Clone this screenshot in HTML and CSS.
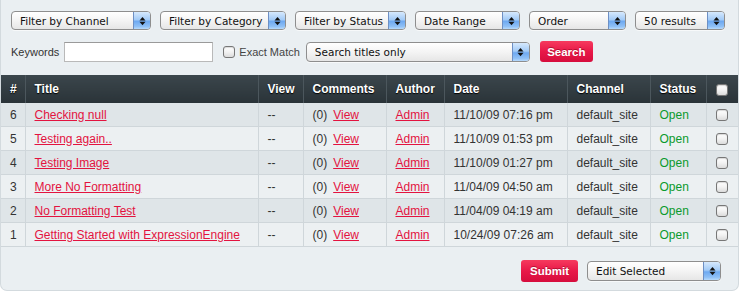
FILE: index.html
```html
<!DOCTYPE html>
<html lang="en">
<head>
    <meta charset="UTF-8">
    <title>Edit Channel Entries</title>
    <link rel="stylesheet" href="styles.css">
</head>
<body>
    <div class="panel">
        <!-- Filters -->
        <div class="filters">
            <div class="select w-channel"><select><option>Filter by Channel</option></select><span class="arrows"><svg width="7" height="10" viewBox="0 0 7 10"><polygon points="3.5,1 6.5,4.5 0.5,4.5"/><polygon points="0.5,5.8 6.5,5.8 3.5,9.3"/></svg></span></div>
            <div class="select w-category"><select><option>Filter by Category</option></select><span class="arrows"><svg width="7" height="10" viewBox="0 0 7 10"><polygon points="3.5,1 6.5,4.5 0.5,4.5"/><polygon points="0.5,5.8 6.5,5.8 3.5,9.3"/></svg></span></div>
            <div class="select w-status"><select><option>Filter by Status</option></select><span class="arrows"><svg width="7" height="10" viewBox="0 0 7 10"><polygon points="3.5,1 6.5,4.5 0.5,4.5"/><polygon points="0.5,5.8 6.5,5.8 3.5,9.3"/></svg></span></div>
            <div class="select w-date"><select><option>Date Range</option></select><span class="arrows"><svg width="7" height="10" viewBox="0 0 7 10"><polygon points="3.5,1 6.5,4.5 0.5,4.5"/><polygon points="0.5,5.8 6.5,5.8 3.5,9.3"/></svg></span></div>
            <div class="select w-order"><select><option>Order</option></select><span class="arrows"><svg width="7" height="10" viewBox="0 0 7 10"><polygon points="3.5,1 6.5,4.5 0.5,4.5"/><polygon points="0.5,5.8 6.5,5.8 3.5,9.3"/></svg></span></div>
            <div class="select w-perpage"><select><option>50 results</option></select><span class="arrows"><svg width="7" height="10" viewBox="0 0 7 10"><polygon points="3.5,1 6.5,4.5 0.5,4.5"/><polygon points="0.5,5.8 6.5,5.8 3.5,9.3"/></svg></span></div>
        </div>

        <!-- Keyword search -->
        <div class="search-row">
            <label class="kw-label" for="keywords">Keywords</label>
            <input type="text" id="keywords" class="keywords">
            <label class="exact"><input type="checkbox" class="check"> Exact Match</label>
            <div class="select w-search"><select><option>Search titles only</option></select><span class="arrows"><svg width="7" height="10" viewBox="0 0 7 10"><polygon points="3.5,1 6.5,4.5 0.5,4.5"/><polygon points="0.5,5.8 6.5,5.8 3.5,9.3"/></svg></span></div>
            <button class="btn btn-search">Search</button>
        </div>

        <table class="entries">
            <colgroup>
                <col class="c-id"><col class="c-title"><col class="c-view"><col class="c-comments"><col class="c-author"><col class="c-date"><col class="c-channel"><col class="c-status"><col class="c-check">
            </colgroup>
            <thead>
                <tr>
                    <th>#</th>
                    <th>Title</th>
                    <th>View</th>
                    <th>Comments</th>
                    <th>Author</th>
                    <th>Date</th>
                    <th>Channel</th>
                    <th>Status</th>
                    <th class="center"><input type="checkbox" class="check"></th>
                </tr>
            </thead>
            <tbody>
                <tr>
                    <td>6</td>
                    <td><a href="#">Checking null</a></td>
                    <td>--</td>
                    <td>(0)<a href="#" class="view">View</a></td>
                    <td><a href="#">Admin</a></td>
                    <td>11/10/09 07:16 pm</td>
                    <td>default_site</td>
                    <td class="open">Open</td>
                    <td class="center"><input type="checkbox" class="check"></td>
                </tr>
                <tr>
                    <td>5</td>
                    <td><a href="#">Testing again..</a></td>
                    <td>--</td>
                    <td>(0)<a href="#" class="view">View</a></td>
                    <td><a href="#">Admin</a></td>
                    <td>11/10/09 01:53 pm</td>
                    <td>default_site</td>
                    <td class="open">Open</td>
                    <td class="center"><input type="checkbox" class="check"></td>
                </tr>
                <tr>
                    <td>4</td>
                    <td><a href="#">Testing Image</a></td>
                    <td>--</td>
                    <td>(0)<a href="#" class="view">View</a></td>
                    <td><a href="#">Admin</a></td>
                    <td>11/10/09 01:27 pm</td>
                    <td>default_site</td>
                    <td class="open">Open</td>
                    <td class="center"><input type="checkbox" class="check"></td>
                </tr>
                <tr>
                    <td>3</td>
                    <td><a href="#">More No Formatting</a></td>
                    <td>--</td>
                    <td>(0)<a href="#" class="view">View</a></td>
                    <td><a href="#">Admin</a></td>
                    <td>11/04/09 04:50 am</td>
                    <td>default_site</td>
                    <td class="open">Open</td>
                    <td class="center"><input type="checkbox" class="check"></td>
                </tr>
                <tr>
                    <td>2</td>
                    <td><a href="#">No Formatting Test</a></td>
                    <td>--</td>
                    <td>(0)<a href="#" class="view">View</a></td>
                    <td><a href="#">Admin</a></td>
                    <td>11/04/09 04:19 am</td>
                    <td>default_site</td>
                    <td class="open">Open</td>
                    <td class="center"><input type="checkbox" class="check"></td>
                </tr>
                <tr>
                    <td>1</td>
                    <td><a href="#">Getting Started with ExpressionEngine</a></td>
                    <td>--</td>
                    <td>(0)<a href="#" class="view">View</a></td>
                    <td><a href="#">Admin</a></td>
                    <td>10/24/09 07:26 am</td>
                    <td>default_site</td>
                    <td class="open">Open</td>
                    <td class="center"><input type="checkbox" class="check"></td>
                </tr>
            </tbody>
        </table>

        <div class="footer">
            <button class="btn btn-submit">Submit</button>
            <div class="select w-action"><select><option>Edit Selected</option></select><span class="arrows"><svg width="7" height="10" viewBox="0 0 7 10"><polygon points="3.5,1 6.5,4.5 0.5,4.5"/><polygon points="0.5,5.8 6.5,5.8 3.5,9.3"/></svg></span></div>
        </div>
    </div>
</body>
</html>
```

FILE: styles.css
```css
/* General */
body {
    margin: 0;
    background: #fff;
    font-family: "Liberation Sans", Arial, sans-serif;
    font-size: 12px;
    color: #333;
}

.panel {
    height: 291px;
    box-sizing: border-box;
    background: #eaeff2;
    border: 1px solid #d3dade;
    border-top: 0;
    border-radius: 0 0 7px 7px;
}

/* Aqua style selects */
.select {
    display: flex;
    box-sizing: border-box;
    height: 19px;
    border: 1px solid #8e8e8e;
    border-radius: 4px;
    background: linear-gradient(#ffffff, #f4f4f4 50%, #e6e6e6);
    box-shadow: 0 1px 0 rgba(255, 255, 255, 0.6);
    overflow: hidden;
}

.select select {
    flex: 1;
    min-width: 0;
    appearance: none;
    -webkit-appearance: none;
    border: 0;
    background: transparent;
    padding: 0 0 0 8px;
    margin: 0;
    font-family: "DejaVu Sans", "Liberation Sans", sans-serif;
    font-size: 10.5px;
    color: #111;
    outline: none;
}

.select .arrows {
    width: 16px;
    display: flex;
    align-items: center;
    justify-content: center;
    border-left: 1px solid #6d8fc4;
    background: linear-gradient(#d6e9fd, #a3cbf7 45%, #6ea9f1 55%, #8fc0f6 85%, #b7dafc);
}

.select .arrows svg {
    fill: #111;
}

.w-channel { width: 140px; }
.w-category { width: 126px; }
.w-status { width: 111px; }
.w-date { width: 105px; }
.w-order { width: 97px; }
.w-perpage { width: 90px; }
.w-search { width: 224px; height: 20px; }
.w-action { width: 134px; height: 20px; }

.filters {
    display: flex;
    gap: 9px;
    padding: 11px 10px 0;
}

/* Keyword row */
.search-row {
    display: flex;
    align-items: center;
    padding: 0 10px;
    margin-top: 11px;
    height: 21px;
}

.kw-label {
    font-size: 11px;
    color: #333;
    margin-right: 5px;
}

.keywords {
    box-sizing: border-box;
    width: 149px;
    height: 20px;
    margin: 0 10px 0 0;
    border: 1px solid #b9b9b9;
    border-top-color: #9a9a9a;
    background: #fff;
    padding: 0 4px;
}

.exact {
    display: flex;
    align-items: center;
    gap: 4px;
    font-size: 11px;
    color: #444;
    margin-right: 6px;
}

.check {
    appearance: none;
    -webkit-appearance: none;
    box-sizing: border-box;
    width: 12px;
    height: 12px;
    margin: 0;
    border: 1px solid #777;
    border-radius: 3px;
    background: linear-gradient(#ffffff, #f2f2f2 50%, #dcdcdc);
    box-shadow: inset 0 1px 1px rgba(0, 0, 0, 0.15);
}

.btn {
    box-sizing: border-box;
    border: 0;
    border-radius: 3px;
    padding: 0;
    background: linear-gradient(#f63a5e, #e81848 50%, #d60d3d);
    color: #fff;
    font-family: "Liberation Sans", Arial, sans-serif;
    font-weight: bold;
    font-size: 11.5px;
    text-shadow: 0 -1px 0 rgba(120, 0, 20, 0.5);
    cursor: pointer;
}

.btn-search {
    width: 53px;
    height: 21px;
    margin-left: 10px;
}

.btn-submit {
    width: 57px;
    height: 22px;
}

/* Entries table */
.entries {
    width: 100%;
    margin-top: 13px;
    border-collapse: collapse;
    table-layout: fixed;
}

.c-id { width: 24px; }
.c-title { width: 233px; }
.c-view { width: 45px; }
.c-comments { width: 83px; }
.c-author { width: 58px; }
.c-date { width: 123px; }
.c-channel { width: 83px; }
.c-status { width: 56px; }
.c-check { width: 32px; }

.entries th {
    height: 28px;
    padding: 0 9px;
    text-align: left;
    color: #fff;
    font-weight: bold;
    font-size: 12px;
    text-shadow: 0 1px 1px #000;
    background: linear-gradient(#3b464c, #2a3338);
    border-left: 1px solid #4c575d;
    white-space: nowrap;
}

.entries th:first-child,
.entries td:first-child {
    border-left: 0;
}

.entries td {
    height: 23px;
    padding: 0 9px;
    border-left: 1px solid #cfd6da;
    border-bottom: 1px solid #cfd6da;
    white-space: nowrap;
    overflow: hidden;
}

.entries tbody tr:nth-child(odd) {
    background: #dfe5e8;
}

.entries tbody tr:nth-child(even) {
    background: #ecf0f2;
}

.entries a {
    color: #e3133f;
    text-decoration: underline;
}

.entries .view {
    margin-left: 6px;
}

.entries .open {
    color: #0b9a2c;
}

.entries .center {
    text-align: center;
    padding: 0;
}

.entries .check {
    vertical-align: middle;
}

/* Footer */
.footer {
    display: flex;
    justify-content: flex-end;
    align-items: center;
    gap: 9px;
    margin-top: 13px;
    padding-right: 17px;
}
```
